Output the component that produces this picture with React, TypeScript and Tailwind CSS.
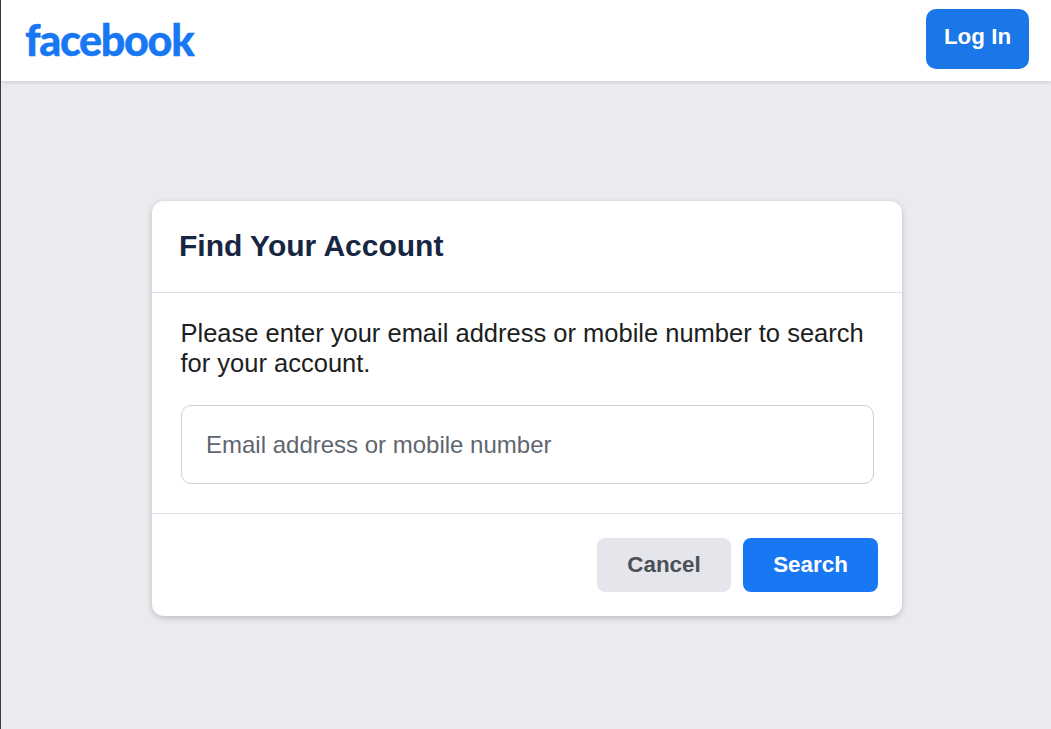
import React from 'react';

export default function App() {
  return (
    <div className="min-h-[729px] bg-[#e9ebee] border-l border-[#3c3c3c] font-['Liberation_Sans',Arial,sans-serif] flex flex-col">
      <header className="h-[81px] bg-white shadow-[0_1px_4px_rgba(0,0,0,0.15)] flex items-center justify-between pl-[24px] pr-[22px]">
        <span className="font-['Lato',sans-serif] font-black text-[43px] leading-none tracking-[-1.3px] text-[#1877f2] -mt-[2px] [-webkit-text-stroke:0.4px_#1877f2]">
          facebook
        </span>
        <button className="w-[103px] h-[60px] mb-[3px] pb-1 rounded-[10px] bg-[#1a77e8] text-white text-[22.4px] font-bold">
          Log In
        </button>
      </header>

      <main className="flex justify-center pt-[120px] pl-[2px]">
        <div className="w-[750px] h-[415px] bg-white rounded-xl shadow-[0_2px_6px_rgba(0,0,0,0.2)] flex flex-col">
          <div className="h-[92px] border-b border-[#dddfe2] pl-[27px] pt-[28px]">
            <h1 className="text-[30px] leading-[34px] font-bold text-[#162643]">Find Your Account</h1>
          </div>
          <div className="h-[221px] border-b border-[#e2e4e7] pl-[29px] pr-[28px] pt-[25px]">
            <p className="text-[25.5px] leading-[30px] text-[#1c1e21] -ml-[0.5px]">
              Please enter your email address or mobile number to search for your account.
            </p>
            <input
              placeholder="Email address or mobile number"
              className="mt-[27px] w-full h-[79px] rounded-[10px] border border-[#ccd0d5] px-6 text-[24px] outline-none placeholder:text-[#5f6670]"
            />
          </div>
          <div className="flex-1 flex justify-end items-start gap-3 pt-6 pr-6">
            <button className="w-[134px] h-[54px] pb-px rounded-lg bg-[#e4e6eb] text-[#4b4f56] text-[22.4px] font-bold">
              Cancel
            </button>
            <button className="w-[135px] h-[54px] pb-px rounded-lg bg-[#1877f2] text-white text-[22.4px] font-bold">
              Search
            </button>
          </div>
        </div>
      </main>
    </div>
  );
}
